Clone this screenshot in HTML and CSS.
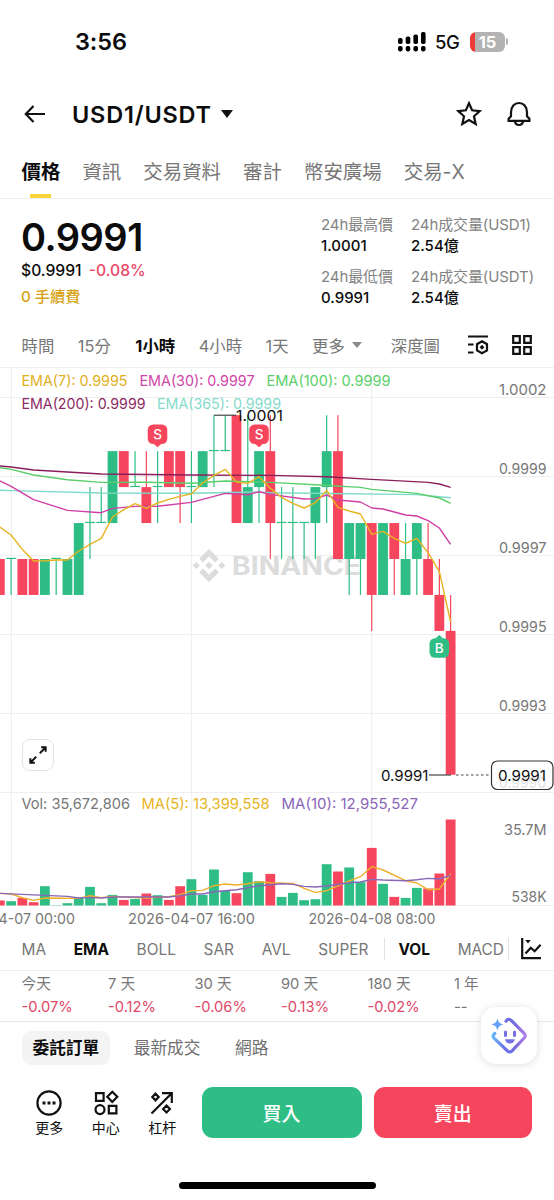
FILE: index.html
```html
<!DOCTYPE html>
<html lang="zh-Hant">
<head>
  <meta charset="UTF-8" />
  <meta name="viewport" content="width=device-width, initial-scale=1.0"/>
  <title>USD1/USDT</title>
  <link rel="stylesheet" href="styles.css">
</head>
<body>

  <div class="status-bar">
    <span class="time">3:56</span>
    <div class="status-icons">
      <svg class="signal" width="28" height="20" viewBox="0 0 28 20">
        <rect x="0" y="6" width="4.6" height="6" rx="1.8"/>
        <rect x="7.7" y="4.5" width="4.6" height="7.5" rx="1.8"/>
        <rect x="15.4" y="2.5" width="4.6" height="9.5" rx="1.8"/>
        <rect x="23" y="0" width="4.6" height="12" rx="1.8"/>
        <rect x="0" y="14" width="4.6" height="5.4" rx="1.8"/>
        <rect x="7.7" y="14" width="4.6" height="5.4" rx="1.8"/>
        <rect x="15.4" y="14" width="4.6" height="5.4" rx="1.8"/>
        <rect x="23" y="14" width="4.6" height="5.4" rx="1.8"/>
      </svg>
      <span class="network">5G</span>
      <div class="battery"><span>15</span></div>
      <i class="battery-cap"></i>
    </div>
  </div>

  <header>
    <svg class="back" width="22" height="18" viewBox="0 0 22 18">
      <path d="M21 9H2M9.5 1L1.8 9l7.7 8"/>
    </svg>
    <h1>USD1/USDT</h1>
    <i class="caret"></i>
    <svg class="star" width="26" height="26" viewBox="0 0 26 26">
      <path d="M13 2.2l3.1 7.1 7.7.8-5.8 5.2 1.7 7.7-6.7-4-6.7 4L8 15.3 2.2 10.1l7.7-.8z"/>
    </svg>
    <svg class="bell" width="26" height="26" viewBox="0 0 26 26">
      <path d="M5 11.5C5 5.5 8.5 2 13 2s8 3.5 8 9.5v3.7l2.4 2.5v2.1H2.6v-2.1L5 15.2z"/>
      <path d="M8.7 20c.6 2.6 2.1 4 4.3 4s3.7-1.4 4.3-4"/>
    </svg>
  </header>

  <nav class="tabs">
    <a class="active">價格</a>
    <a>資訊</a>
    <a>交易資料</a>
    <a>審計</a>
    <a>幣安廣場</a>
    <a>交易-X</a>
  </nav>

  <section class="summary">
    <div class="price-box">
      <div class="price">0.9991</div>
      <div class="sub-price">$0.9991 <span class="down">-0.08%</span></div>
      <div class="fee">0 手續費</div>
    </div>
    <div class="stats">
      <div class="stat"><span>24h最高價</span><b>1.0001</b></div>
      <div class="stat"><span>24h成交量(USD1)</span><b>2.54億</b></div>
      <div class="stat"><span>24h最低價</span><b>0.9991</b></div>
      <div class="stat"><span>24h成交量(USDT)</span><b>2.54億</b></div>
    </div>
  </section>

  <div class="intervals">
    <a>時間</a>
    <a>15分</a>
    <a class="active">1小時</a>
    <a>4小時</a>
    <a>1天</a>
    <a class="more">更多<i class="caret small"></i></a>
    <a class="depth">深度圖</a>
    <svg class="settings-icon" width="22" height="20" viewBox="0 0 22 20">
      <path d="M1 1.5h20M1 9.5h5.5M1 17.5h5.5M15 6.3l5 2.9v6.2l-5 2.9-5-2.9V9.2z"/>
      <path class="fill" d="M15 9.8l2.4 2.5-2.4 2.5-2.4-2.5z"/>
    </svg>
    <svg class="grid-icon" width="20" height="20" viewBox="0 0 20 20">
      <path d="M1.2 1.2h6.6v6.6H1.2zM12.2 1.2h6.6v6.6h-6.6zM1.2 12.2h6.6v6.6H1.2zM12.2 12.2h6.6v6.6h-6.6z"/>
    </svg>
  </div>

  <div class="chart">
    <svg id="chart" width="554" height="563" viewBox="0 367 554 563"></svg>
    <button class="expand">
      <svg width="20" height="20" viewBox="0 0 20 20">
        <path d="M8 12L1.5 18.500M1.500 13.500v5h5M12 8l6.500-6.500M13.500 1.500h5v5"/>
      </svg>
    </button>
  </div>

  <div class="indicators">
    <div class="main-ind">
      <a>MA</a>
      <a class="active">EMA</a>
      <a>BOLL</a>
      <a>SAR</a>
      <a>AVL</a>
      <a>SUPER</a>
    </div>
    <div class="sub-ind">
      <a class="active">VOL</a>
      <a>MACD</a>
    </div>
    <svg width="21" height="22" viewBox="0 0 21 22">
      <path d="M1.2 0v20.2H20M4.5 15.5l5.3-5.7 3.8 3.5 6-6.500"/>
      <path class="fill" d="M4.3 2h5.4L7 5.5z"/>
    </svg>
  </div>

  <div class="performance">
    <div><span>今天</span><em>-0.07%</em></div>
    <div><span>7 天</span><em>-0.12%</em></div>
    <div><span>30 天</span><em>-0.06%</em></div>
    <div><span>90 天</span><em>-0.13%</em></div>
    <div><span>180 天</span><em>-0.02%</em></div>
    <div><span>1 年</span><em class="none">--</em></div>
  </div>

  <div class="order-tabs">
    <a class="active">委託訂單</a>
    <a>最新成交</a>
    <a>網路</a>
  </div>

  <button class="assistant">
    <svg width="38" height="40" viewBox="0 0 38 40">
      <defs>
        <linearGradient id="ai" x1="0" y1="0" x2="1" y2="0">
          <stop offset="0" stop-color="#62b4fb"/>
          <stop offset=".35" stop-color="#6d74ea"/>
          <stop offset=".7" stop-color="#7468e0"/>
          <stop offset="1" stop-color="#b083ea"/>
        </linearGradient>
      </defs>
      <path class="ring" d="M16 5.2c1.2-2.200 3.500-2.500 5.200-.8l13 13c1.400 1.400 1.400 3.200 0 4.600L22 34.800c-1.400 1.400-3.200 1.400-4.600 0L4.200 22.300c-1.600-1.600-1.500-3.700.6-4.800"/>
      <path class="spark" d="M7.500 2.500c.9 3.700 2 4.900 5.800 6-3.800 1-4.900 2.200-5.800 6-1-3.800-2.100-5-5.900-6 3.800-1.100 4.900-2.300 5.900-6z"/>
      <path class="eyes" d="M15.500 16v3.500M24.500 16v3.500"/>
      <path class="mouth" d="M15 23.300h9.800c-.5 2.800-2.300 4.200-4.900 4.200s-4.400-1.400-4.900-4.200z"/>
    </svg>
  </button>

  <footer>
    <a class="tool">
      <svg width="26" height="26" viewBox="0 0 26 26">
        <circle cx="13" cy="13" r="11.6"/>
        <path class="fill" d="M6.500 11.500h3v3h-3zM11.500 11.500h3v3h-3zM16.500 11.500h3v3h-3z"/>
      </svg>
      更多
    </a>
    <a class="tool">
      <svg width="26" height="26" viewBox="0 0 26 26">
        <path d="M3 3.200h7.600v7.600H3zM15.800 15.800h7.600v7.600h-7.600zM19.300 1.700l5 5.100-5 5.100-5-5.100z"/>
        <circle cx="7" cy="19.6" r="4.5"/>
      </svg>
      中心
    </a>
    <a class="tool">
      <svg width="26" height="26" viewBox="0 0 26 26">
        <path d="M2.500 23.500L22 4M13 3.200h9.800V13M6.500 3.700l3.200 3.300-3.200 3.300L3.300 7zM17.500 15.500l3.400 3.500-3.400 3.500-3.400-3.500z"/>
      </svg>
      杠杆
    </a>
    <button class="buy">買入</button>
    <button class="sell">賣出</button>
  </footer>

  <div class="home-bar"></div>

  <script src="script.js"></script>
</body>
</html>
```

FILE: styles.css
```css
* {
  box-sizing: border-box;
}

body {
  margin: 0;
  width: 554px;
  height: 1200px;
  overflow: hidden;
  position: relative;
  background: #fff;
  color: #0c0c0c;
  font-family: 'Inter', 'Noto Sans CJK TC', sans-serif;
}

svg {
  display: block;
  flex: none;
  fill: none;
  stroke: #111;
  stroke-width: 2.2;
}

svg .fill {
  fill: #111;
  stroke: none;
}

button {
  border: none;
  padding: 0;
  font-family: inherit;
}

.status-bar {
  height: 83px;
  padding: 0 46px 0 75px;
  display: flex;
  align-items: center;
  justify-content: space-between;
}

.time {
  font-size: 23.5px;
  font-weight: 600;
  letter-spacing: -0.1px;
}

.status-icons {
  display: flex;
  align-items: center;
}

.signal {
  fill: #000;
  stroke: none;
}

.network {
  margin: 0 10px 0 9px;
  width: 25px;
  font-size: 18.5px;
  font-weight: 500;
  letter-spacing: -0.5px;
}

.battery {
  width: 35px;
  height: 20px;
  border-radius: 6px;
  background: linear-gradient(to right, #ee3b37 5px, #b3b3b3 5px);
  color: #fff;
  font-size: 16.5px;
  font-weight: 700;
  line-height: 20px;
  text-align: center;
}

.battery-cap {
  width: 2px;
  height: 7px;
  margin-left: 1px;
  border-radius: 0 3px 3px 0;
  background: #b3b3b3;
}

header {
  height: 62px;
  padding: 0 22px 0 24px;
  display: flex;
  align-items: center;
}

h1 {
  margin: 0 0 0 26px;
  width: 142px;
  font-size: 23.5px;
  font-weight: 600;
  letter-spacing: 0.8px;
  white-space: nowrap;
}

.caret {
  border: 6.5px solid transparent;
  border-top: 8px solid #111;
  border-bottom: none;
  margin-left: 7px;
}

.caret.small {
  border-width: 6px 5.5px 0;
  border-top-color: #8a8a8a;
}

.star {
  margin-left: auto;
}

.bell {
  margin-left: 24px;
}

.tabs {
  height: 54px;
  padding: 0 21.5px;
  display: flex;
  gap: 22px;
  border-bottom: 1px solid #efefef;
}

.tabs a {
  position: relative;
  font-size: 19.45px;
  line-height: 54px;
  color: #777;
  white-space: nowrap;
}

.tabs .active {
  color: #0c0c0c;
  font-weight: 600;
}

.tabs .active::after {
  content: '';
  position: absolute;
  left: 8px;
  bottom: 0;
  width: 21px;
  height: 4px;
  background: #f8d33a;
}

.summary {
  height: 126px;
  padding: 0 21px;
  display: flex;
  justify-content: space-between;
}

.price {
  margin-top: 15px;
  font-size: 38px;
  line-height: 46px;
  font-weight: 600;
  letter-spacing: -0.5px;
}

.sub-price {
  font-size: 15.7px;
  line-height: 22px;
  font-weight: 500;
}

.down {
  margin-left: 3px;
  color: #e8476b;
}

.fee {
  margin-top: 3px;
  font-size: 15.2px;
  line-height: 24px;
  font-weight: 500;
  color: #d6a316;
}

.stats {
  width: 212px;
  padding-top: 16px;
  display: grid;
  grid-template-columns: 90px 122px;
  grid-auto-rows: 52px;
}

.stat {
  display: flex;
  flex-direction: column;
  font-size: 15px;
  line-height: 20.5px;
  letter-spacing: -0.1px;
  white-space: nowrap;
}

.stat span {
  color: #838383;
}

.stat b {
  font-weight: 500;
  letter-spacing: 0;
}

.intervals {
  height: 42px;
  padding: 0 22px 2px 21.5px;
  display: flex;
  align-items: center;
  gap: 23.5px;
  font-size: 16.4px;
  color: #777;
  white-space: nowrap;
}

.intervals .active {
  color: #0c0c0c;
  font-weight: 700;
  margin-left: 1px;
}

.more {
  display: flex;
  align-items: center;
}

.intervals .depth {
  margin-left: auto;
}

.settings-icon {
  margin-left: 3px;
}

.chart {
  position: relative;
  height: 563px;
}

.chart text {
  stroke: none;
}

.expand {
  position: absolute;
  left: 22px;
  top: 372px;
  width: 32px;
  height: 32px;
  border: 1px solid #e3e3e3;
  border-radius: 8px;
  background: #fff;
  display: flex;
  align-items: center;
  justify-content: center;
}

.indicators {
  height: 41px;
  padding: 0 0 2px 21.5px;
  display: flex;
  align-items: center;
  border-bottom: 1px solid #ededed;
  font-size: 15.4px;
  color: #777;
}

.indicators .active {
  color: #0c0c0c;
  font-weight: 700;
}

.main-ind,
.sub-ind {
  height: 22px;
  display: flex;
  align-items: center;
  gap: 27.7px;
  border-right: 1px solid #e2e2e2;
}

.main-ind {
  width: 363px;
}

.sub-ind {
  width: 124px;
  padding-left: 14px;
  margin-right: 12px;
}

.expand svg {
  width: 18px;
  height: 18px;
}

.performance {
  height: 51px;
  padding: 2px 0 0 21.5px;
  display: grid;
  grid-template-columns: repeat(6, 86.5px);
  border-bottom: 1px solid #e8e8e8;
  font-size: 14.7px;
  line-height: 23px;
  color: #777;
}

.performance em {
  display: block;
  font-style: normal;
  color: #e04868;
}

.performance .none {
  color: #777;
}

.order-tabs {
  padding: 9px 21.5px 0;
  display: flex;
  gap: 23.5px;
  font-size: 16.7px;
  line-height: 34px;
  color: #6f6f6f;
}

.order-tabs .active {
  padding: 0 11px;
  border-radius: 9px;
  background: #f4f4f4;
  color: #0c0c0c;
  font-weight: 600;
}

.order-tabs a + a {
  margin-right: 11px;
}

.assistant {
  position: absolute;
  left: 481px;
  top: 1007px;
  width: 56px;
  height: 57px;
  border-radius: 15px;
  background: #fff;
  box-shadow: 0 1px 8px rgba(0, 0, 0, 0.13);
  display: flex;
  align-items: center;
  justify-content: center;
}

.assistant svg {
  stroke-linecap: round;
}

.ring {
  stroke: url(#ai);
  stroke-width: 3.2;
}

.spark {
  fill: #62a2fa;
  stroke: none;
}

.eyes {
  stroke: #7470e4;
  stroke-width: 3;
}

.mouth {
  fill: #7470e4;
  stroke: none;
}

footer {
  padding: 22px 22px 0 21px;
  display: flex;
}

.tool {
  width: 56.5px;
  padding-top: 3px;
  display: flex;
  flex-direction: column;
  align-items: center;
  font-size: 14px;
  line-height: 23px;
}

.buy,
.sell {
  height: 51px;
  border-radius: 11px;
  color: #fff;
  font-size: 19px;
  font-weight: 500;
}

.buy {
  width: 160px;
  margin-left: 11px;
  background: #2ebd85;
}

.sell {
  flex: 1;
  margin-left: 12px;
  background: #f6465d;
}

.home-bar {
  width: 197px;
  height: 7px;
  margin: 43px 0 0 179px;
  border-radius: 4px;
  background: #000;
}
```

FILE: script.js
```javascript
const GREEN = '#2ebd85';
const RED = '#f6465d';
const STEP = 11.27;
const X0 = 11.1;

const xAt = i => X0 + i * STEP;
// one level = 0.0001, level 0 is 1.0001
const yAt = level => 415.2 + level * 35.95;

// index, color, body top, body bottom, wick top, wick bottom, volume
const candles = [
  [-1, 'r', 4, 5, 4, 5, 5], [0, 'g', 4, 4, 4, 5, 4.3], [1, 'r', 4, 5, 4, 5, 7.6], [2, 'r', 4, 5, 4, 5, 3.3],
  [3, 'g', 4, 5, 4, 5, 19.3], [4, 'g', 4, 4, 4, 5, 0.3], [5, 'g', 4, 5, 4, 5, 2.3], [6, 'g', 3, 5, 3, 5, 7.6],
  [7, 'g', 3, 3, 2, 4, 18.6], [8, 'g', 3, 3, 2, 3, 2.3], [9, 'g', 1, 3, 1, 3, 10.6], [10, 'r', 1, 2, 1, 2, 5.6],
  [11, 'g', 2, 2, 1, 2, 6.6], [12, 'r', 2, 3, 1, 3, 12], [13, 'g', 2, 2, 1, 3, 10.3], [14, 'r', 1, 2, 1, 2, 5.6],
  [15, 'r', 1, 2, 1, 3, 19.3], [16, 'g', 2, 2, 1, 3, 26.3], [17, 'g', 1, 2, 1, 2, 10.6], [18, 'g', 1, 1, 0, 2, 36],
  [19, 'g', 1, 1, 0, 1, 14.6], [20, 'r', 0, 3, 0, 3, 12.3], [21, 'g', 2, 3, 0, 3, 33.3], [22, 'g', 1, 2, 1, 3, 24.3],
  [23, 'r', 1, 3, 0, 4, 31.6], [24, 'g', 3, 3, 2, 4, 8.6], [25, 'g', 3, 3, 2, 4, 12.6], [26, 'g', 3, 3, 3, 4, 5.3],
  [27, 'g', 2, 3, 2, 4, 6.3], [28, 'g', 1, 2, 0, 3, 41.3], [29, 'r', 1, 4, 0, 4, 34], [30, 'g', 3, 4, 3, 5, 38],
  [31, 'g', 3, 4, 3, 5, 23.3], [32, 'r', 3, 5, 3, 6, 57.6], [33, 'g', 3, 5, 3, 5, 21.6], [34, 'r', 3, 4, 3, 5, 8.6],
  [35, 'g', 4, 5, 3, 5, 7.6], [36, 'g', 3, 4, 3, 5, 17.6], [37, 'r', 4, 5, 3, 5, 17], [38, 'r', 5, 6, 4, 6, 32],
  [39, 'r', 6, 10, 5, 10, 86]
];

// [index, y] pairs
const lines = {
  '#7dd9c8': [[-1, 490.3], [0, 490.6], [8, 493], [16, 493.2], [22, 492], [23, 492.7], [36, 494.6], [39, 497.7]],
  '#5bcf6a': [[-1, 467.7], [0, 469.4], [2, 475], [5, 479.7], [8, 482.4], [12, 482.3], [16, 483.3], [19, 481], [23, 482.4], [27, 484.7], [31, 487.4], [32, 489.4], [36, 493.4], [38, 498], [39, 503.4]],
  '#8c1d5c': [[-1, 466], [0, 467], [2, 470], [8, 474], [16, 475], [23, 475.4], [28, 476.7], [32, 479.4], [37, 482.4], [38, 484], [39, 487.4]],
  '#d13fa5': [[-1, 481], [0, 486.4], [2, 499.7], [5, 510.4], [8, 512.7], [9, 508.4], [11, 506.4], [13, 506.3], [16, 502.4], [19, 493.4], [21, 494.7], [22, 491.7], [23, 494.4], [26, 499], [27, 498.7], [28, 495], [29, 500], [31, 502], [32, 508], [33, 509], [35, 515], [36, 516], [37, 520.7], [38, 528], [39, 544.4]],
  '#e6b422': [527, 535, 549.4, 561, 560.7, 560, 560, 551, 544.4, 538.4, 517, 509.7, 503.7, 508.4, 503, 499.4, 496.4, 493.7, 483, 475.4, 469.4, 482, 483.4, 476.7, 488.4, 497.4, 503.4, 508, 502.7, 490.4, 507.4, 511, 514, 534.4, 531.4, 538.4, 543.4, 538.4, 552.7, 571.7, 622].map((y, i) => [i - 1, y])
};

const volumeLines = {
  '#efb02d': [[-1, 893.4], [0, 894], [1, 897.7], [2, 900.4], [3, 898], [6, 898.4], [7, 895.7], [8, 897.7], [9, 896.4], [12, 898], [14, 896.7], [15, 894.7], [16, 890.7], [17, 890.4], [18, 885.7], [19, 884], [20, 885], [21, 883.7], [22, 881.7], [23, 882.7], [25, 883.4], [26, 888.4], [27, 892.4], [28, 890.7], [30, 881], [31, 876.7], [32, 866.7], [33, 870], [35, 880.7], [36, 883], [37, 889.7], [38, 889], [39, 874]],
  '#8a66b8': [[-1, 893.4], [1, 894.4], [5, 896.4], [6, 898], [7, 897.4], [8, 898], [9, 897], [14, 897], [15, 895.7], [16, 894], [17, 894], [18, 891.7], [20, 889.7], [22, 885.7], [24, 883.7], [25, 884.4], [26, 886.4], [27, 887], [28, 886], [30, 882.7], [31, 882], [32, 879.4], [33, 880], [35, 880.7], [36, 879.7], [37, 878.4], [38, 879], [39, 875.4]]
};

const rect = (x, y, w, h, fill, extra = '') =>
  `<rect x="${x}" y="${y}" width="${w}" height="${h}" fill="${fill}" stroke="none" ${extra}/>`;
const line = (x1, y1, x2, y2, color, extra = '') =>
  `<line x1="${x1}" y1="${y1}" x2="${x2}" y2="${y2}" stroke="${color}" stroke-width="1.2" ${extra}/>`;
const text = (x, y, width, color, label, extra = '') =>
  `<text x="${x}" y="${y}" textLength="${width}" lengthAdjust="spacingAndGlyphs" fill="${color}" font-size="14.8" ${extra}>${label}</text>`;
const curve = (points, color) =>
  `<polyline points="${points.map(p => xAt(p[0]) + ',' + p[1]).join(' ')}" stroke="${color}" stroke-width="1.4" stroke-linejoin="round"/>`;

function marker(x, y, letter, color, tip) {
  return rect(x - 9.8, y - 9.8, 19.6, 19.6, color, 'rx="5.5"') +
    `<path d="M${x - 4} ${y + tip * 9.5}h8l-4 ${tip * 3.5}z" fill="${color}" stroke="none"/>` +
    `<text x="${x}" y="${y + 5}" text-anchor="middle" font-size="13.5" font-weight="500" fill="#fff">${letter}</text>`;
}

let out = '';

// grid
[367.5, 397.5, 476.5, 555.5, 634.5, 713.5, 792.5, 905.5].forEach(y => out += line(0, y, 554, y, '#efefef'));
[11.3, 191.5, 371.7].forEach(x => out += line(x, 368, x, 905, '#efefef'));

// watermark
out += `<g transform="translate(209 565.5)" fill="#dcdcdc" stroke="none">
  <path d="M0-16.5L9.8-6.700 6.200-3.100 0-9.300l-6.200 6.200-3.600-3.600zM0 16.500L9.800 6.700 6.200 3.100 0 9.300l-6.200-6.200-3.600 3.600zM0-3.700L3.700 0 0 3.700-3.700 0zM-12.700-3.600L-9.100 0l-3.600 3.600L-16.300 0zM12.700-3.600L16.300 0l-3.600 3.600L9.100 0z"/></g>`;
out += text(232, 574.5, 129, '#dcdcdc', 'BINANCE', 'style="font-size:25px;font-weight:700"');

candles.forEach(([i, c, top, bottom, high, low, vol]) => {
  const color = c === 'g' ? GREEN : RED;
  const x = xAt(i);
  if (low > high) out += line(x, yAt(high), x, yAt(low), color);
  if (top === bottom) out += line(x - 4.9, yAt(top) - 0.6, x + 4.9, yAt(top) - 0.6, color);
  else out += rect(x - 4.9, yAt(top), 9.8, yAt(bottom) - yAt(top), color);
  out += rect(x - 4.9, 905.5 - vol, 9.8, vol, color);
});

for (const color in lines) out += curve(lines[color], color);
for (const color in volumeLines) out += curve(volumeLines[color], color);

out += marker(157.5, 434.3, 'S', RED, 1);
out += marker(259, 434.3, 'S', RED, 1);
out += marker(439.3, 648, 'B', GREEN, -1);

// legends
out += text(21.5, 386, 106, '#e0b020', 'EMA(7): 0.9995');
out += text(139.5, 386, 115, '#cf45a8', 'EMA(30): 0.9997');
out += text(266.5, 386, 124, '#5bcf6a', 'EMA(100): 0.9999');
out += text(21.5, 409, 124, '#8c2a62', 'EMA(200): 0.9999');
out += text(157, 409, 124, '#85dbcb', 'EMA(365): 0.9999');
out += text(21.5, 809, 108.5, '#777', 'Vol: 35,672,806');
out += text(141.5, 809, 128, '#e6b422', 'MA(5): 13,399,558');
out += text(281.5, 809, 136.5, '#8a66b8', 'MA(10): 12,955,527');

// high and low
out += line(214, 415.2, 236, 415.2, '#444');
out += text(236, 420.5, 47, '#111', '1.0001');
out += text(381, 780.5, 47.5, '#111', '0.9991');
out += line(429, 775, 451, 775, '#444');
out += line(456, 775, 491, 775, '#444', 'stroke-dasharray="2.5 2.5"');

// axes
['1.0002', '0.9999', '0.9997', '0.9995', '0.9993'].forEach((label, i) =>
  out += text(499, 394.7 + i * 79.1, 47.5, '#777', label));
out += '<rect x="491.5" y="761" width="61.5" height="28.5" rx="6" fill="#fff" stroke="#333" stroke-width="1.2"/>';
out += text(499, 788, 47, '#e3e3e3', '0.9990');
out += text(498, 780.5, 48, '#111', '0.9991');
out += text(504, 835, 42.5, '#777', '35.7M');
out += text(511.5, 901.5, 35, '#777', '538K');
out += text(-52, 924, 127, '#777', '2026-04-07 00:00');
out += text(128, 924, 127, '#777', '2026-04-07 16:00');
out += text(308.5, 924, 127, '#777', '2026-04-08 08:00');

document.getElementById('chart').innerHTML = out;
```
